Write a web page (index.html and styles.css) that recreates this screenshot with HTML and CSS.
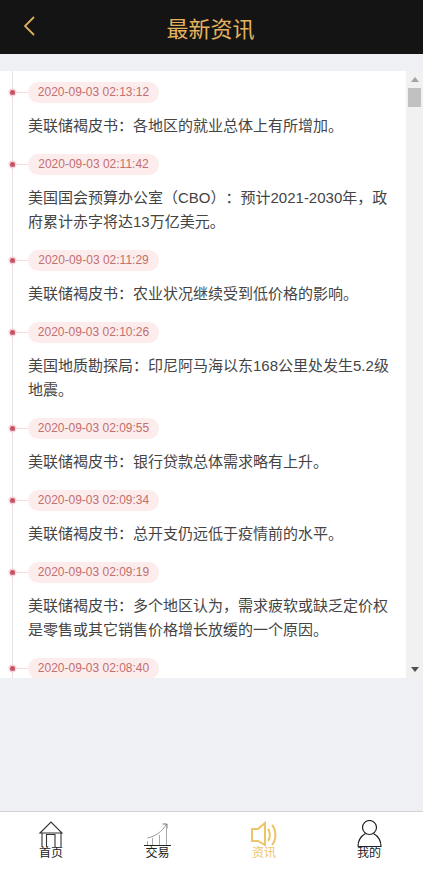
FILE: index.html
```html
<!DOCTYPE html>
<html lang="zh-CN">
<head>
<meta charset="utf-8">
<title>最新资讯</title>
<link rel="stylesheet" href="styles.css">
</head>
<body>
<div class="page">
  <header class="header">
    <svg class="back" viewBox="0 0 14 22" width="14" height="22"><path d="M12 1 L3 10 L12 19" fill="none" stroke="#dcae5e" stroke-width="1.8"/></svg>
    <h1 class="title">最新资讯</h1>
  </header>
  <main class="main">
    <section class="panel">
      <div class="list">
        <article class="item"><div class="time">2020-09-03 02:13:12</div><p class="text">美联储褐皮书：各地区的就业总体上有所增加。</p></article>
        <article class="item"><div class="time">2020-09-03 02:11:42</div><p class="text">美国国会预算办公室（CBO）：预计2021-2030年，政府累计赤字将达13万亿美元。</p></article>
        <article class="item"><div class="time">2020-09-03 02:11:29</div><p class="text">美联储褐皮书：农业状况继续受到低价格的影响。</p></article>
        <article class="item"><div class="time">2020-09-03 02:10:26</div><p class="text">美国地质勘探局：印尼阿马海以东168公里处发生5.2级地震。</p></article>
        <article class="item"><div class="time">2020-09-03 02:09:55</div><p class="text">美联储褐皮书：银行贷款总体需求略有上升。</p></article>
        <article class="item"><div class="time">2020-09-03 02:09:34</div><p class="text">美联储褐皮书：总开支仍远低于疫情前的水平。</p></article>
        <article class="item"><div class="time">2020-09-03 02:09:19</div><p class="text">美联储褐皮书：多个地区认为，需求疲软或缺乏定价权是零售或其它销售价格增长放缓的一个原因。</p></article>
        <article class="item"><div class="time">2020-09-03 02:08:40</div></article>
      </div>
      <div class="scrollbar">
        <span class="arrow-up"></span>
        <span class="thumb"></span>
        <span class="spacer"></span>
        <span class="arrow-down"></span>
      </div>
    </section>
  </main>
  <nav class="tabbar">
    <a class="tab">
      <svg class="icon" viewBox="0 0 26 28" width="26" height="28"><g fill="none" stroke="#333" stroke-width="1.1"><path d="M2 13 L13 2 L24 13 Z"/><path d="M4 13 V27 M23 13 V27"/><path d="M8.5 27 V14.5 H17 V27"/></g></svg>
      <span class="label">首页</span>
    </a>
    <a class="tab">
      <svg class="icon" viewBox="0 0 27 28" width="27" height="28"><g fill="none" stroke-width="1"><path d="M3.5 18 C11 16.5 18 12 22.5 4" stroke="#999"/><path d="M18.5 4 H23 V8.5" stroke="#777"/><path d="M3.5 21 V25 M8.5 18 V25 M15.5 15 V25 M22.5 5 V25" stroke="#aaa"/><path d="M0 25.5 H27" stroke="#222"/></g></svg>
      <span class="label">交易</span>
    </a>
    <a class="tab active">
      <svg class="icon" viewBox="0 0 26 28" width="26" height="28"><g fill="none" stroke="#edc468" stroke-width="2"><path d="M1 9 H7 L14 3 V25 L7 21 H1 Z"/><path d="M17 9 C19.5 12 19.5 18 17 21"/><path d="M21 5 C25.5 10 25.5 20 21 25"/></g></svg>
      <span class="label">资讯</span>
    </a>
    <a class="tab">
      <svg class="icon" viewBox="0 0 25 28" width="25" height="28"><g fill="none" stroke="#222" stroke-width="1.2"><circle cx="12.5" cy="7.5" r="7"/><path d="M1 26.5 C1 20 5 15.5 8.5 13.5 M16.5 13.5 C20 15.5 24 20 24 26.5 H1"/></g></svg>
      <span class="label">我的</span>
    </a>
  </nav>
</div>
</body>
</html>
```

FILE: styles.css
```css
* { box-sizing: border-box; }
html, body { margin: 0; padding: 0; }
body { background: #eff0f4; font-family: "Liberation Sans", "Noto Sans CJK SC", sans-serif; text-spacing-trim: space-all; }
.page { width: 423px; height: 878px; display: flex; flex-direction: column; overflow: hidden; }
.header { height: 54px; flex: none; background: #141414; display: flex; align-items: center; justify-content: center; position: relative; }
.back { position: absolute; left: 22px; top: 16px; }
.title { margin: 0; padding-right: 2px; font-size: 22px; font-weight: 400; color: #e3b25f; }
.main { flex: 1; padding-top: 17px; }
.panel { height: 607px; display: flex; overflow: hidden; }
.list { width: 406px; flex: none; background: #fff; overflow: hidden; padding-top: 11px; position: relative; }
.list::before { content: ""; position: absolute; left: 12px; top: 0; bottom: 0; width: 1px; background: #e8e0e3; }
.item { position: relative; padding: 0 16px 0 28px; }
.time { width: 131px; height: 21px; line-height: 21px; border-radius: 11px; background: #fdecec; color: #c26f6f; font-size: 12px; text-align: center; position: relative; }
.time::before { content: ""; position: absolute; left: -18px; top: 8px; width: 5px; height: 5px; border-radius: 50%; background: #c45563; box-shadow: 0 0 0 1.5px #f6d5d8; z-index: 1; }
.time::after { content: ""; position: absolute; left: -12px; top: 10px; width: 12px; height: 1px; background: #f3dcdd; }
.text { margin: 0; padding: 11px 0 16px; font-size: 15px; line-height: 24px; color: #444; }
.scrollbar { width: 17px; flex: none; background: #f1f1f1; display: flex; flex-direction: column; align-items: center; }
.arrow-up { width: 0; height: 0; margin: 6px 0 6px; border-left: 4px solid transparent; border-right: 4px solid transparent; border-bottom: 5px solid #a3a3a3; }
.thumb { width: 13px; height: 19px; background: #c1c1c1; }
.spacer { flex: 1; }
.arrow-down { width: 0; height: 0; margin: 5px 0 6px; border-left: 4px solid transparent; border-right: 4px solid transparent; border-top: 5px solid #505050; }
.tabbar { height: 67px; flex: none; background: #fff; border-top: 1px solid #d3d4d8; display: grid; grid-template-columns: 102px 111px 102px 108px; }
.tab { display: flex; flex-direction: column; align-items: center; padding-top: 8px; }
.icon { flex: none; display: block; }
.label { font-size: 12px; line-height: 14px; color: #222; margin-top: -2px; }
.active .label { color: #edc468; }
```
